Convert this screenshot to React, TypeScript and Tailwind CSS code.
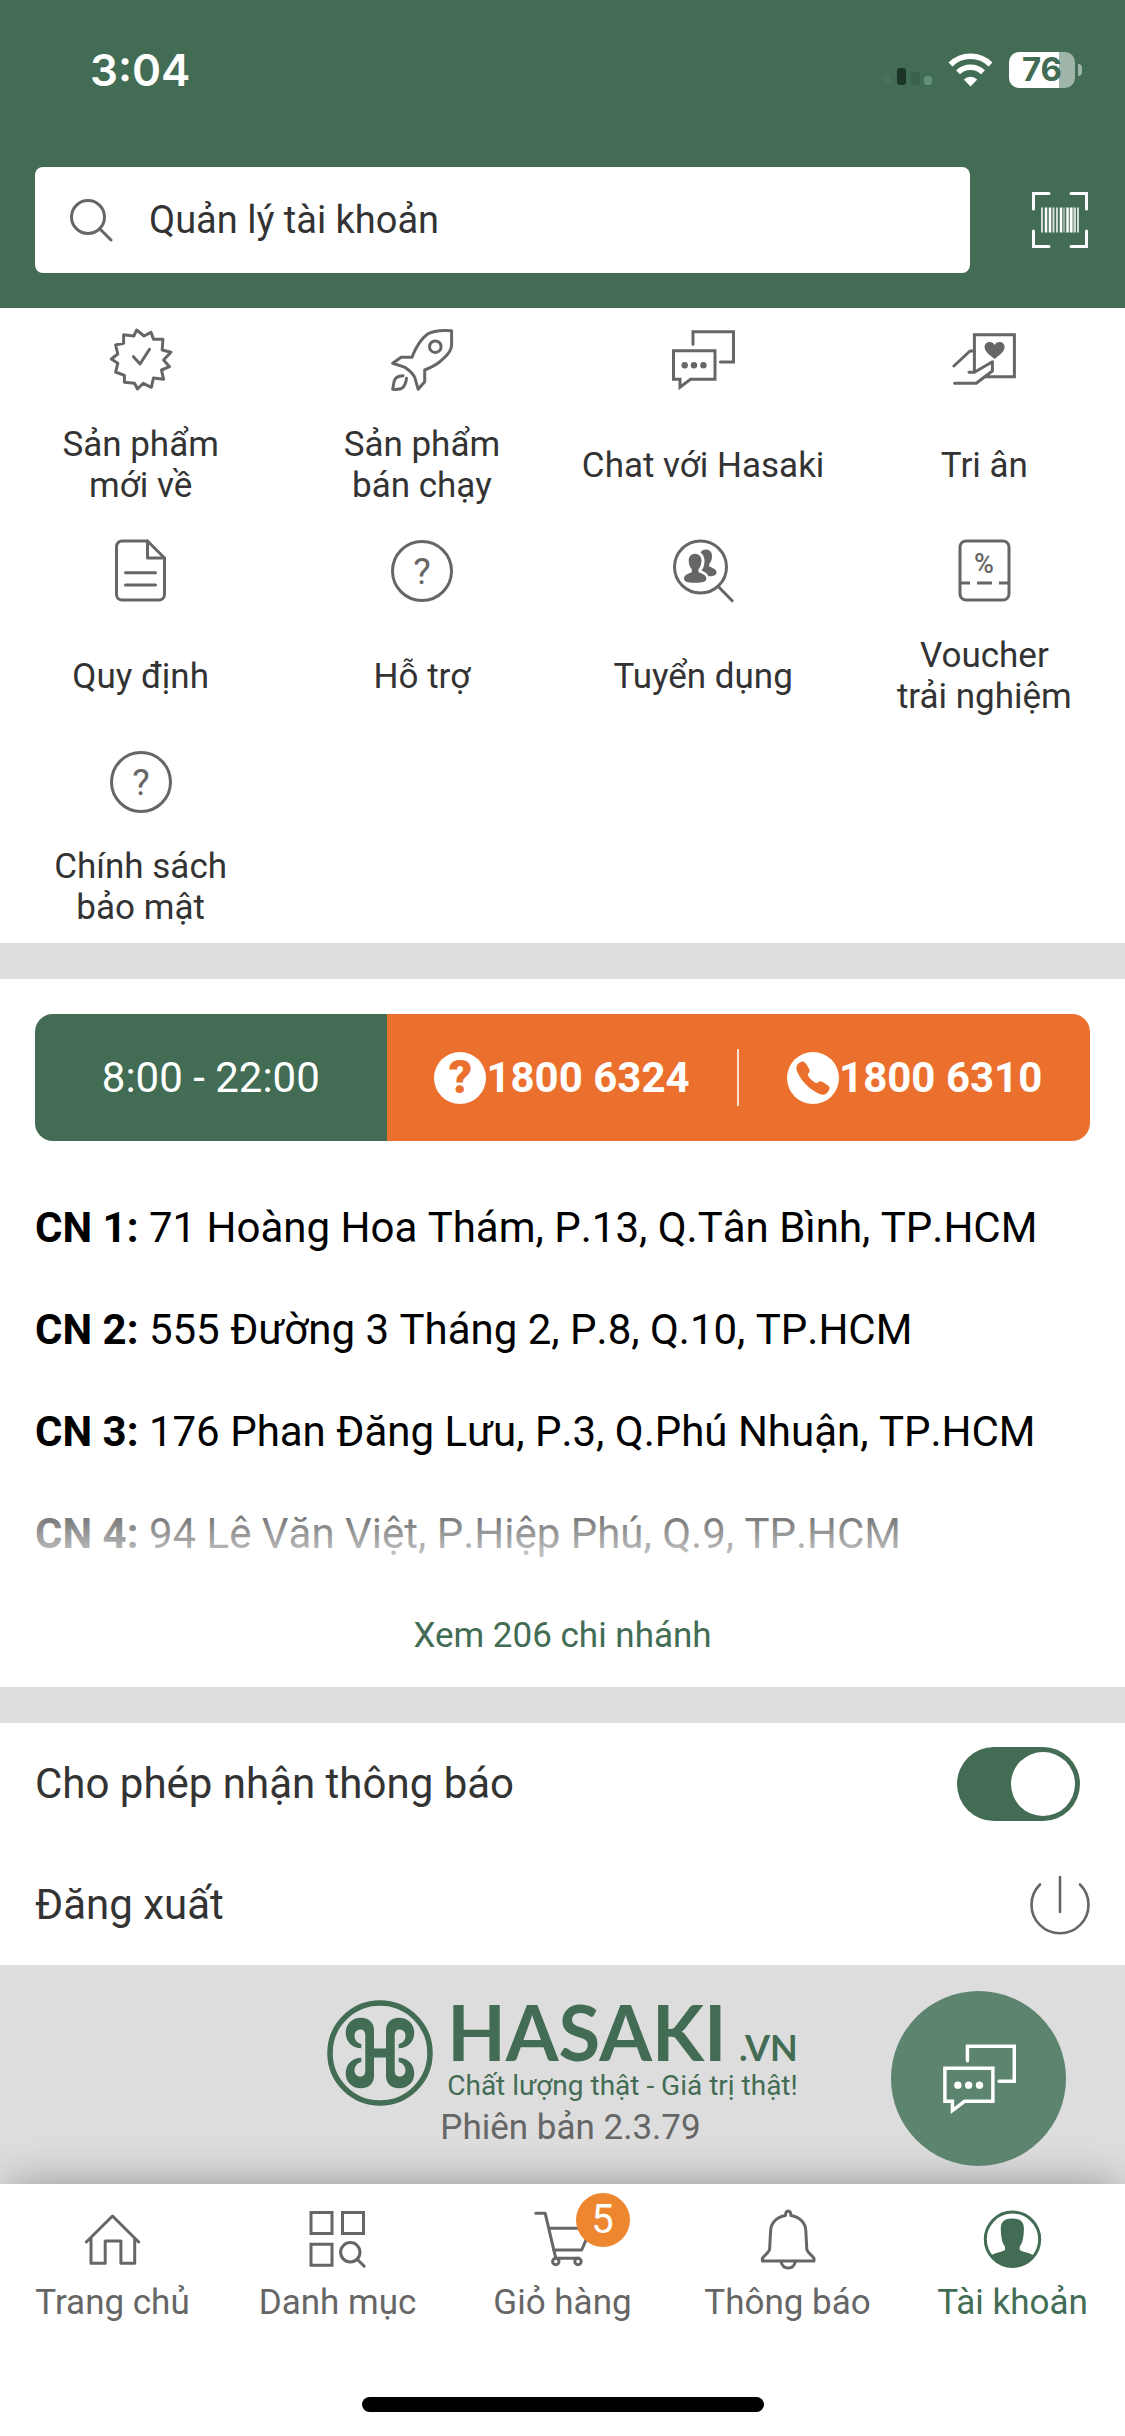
import type { ReactNode } from "react";
import { IoCall } from "react-icons/io5";

interface IconProps {
  children: ReactNode;
  className?: string;
}

// All line icons share a 64x64 grid
function Icon({ children, className = "size-16" }: IconProps) {
  return (
    <svg
      viewBox="0 0 64 64"
      fill="none"
      stroke="currentColor"
      strokeWidth={3}
      strokeLinecap="round"
      strokeLinejoin="round"
      aria-hidden="true"
      className={className}
    >
      {children}
    </svg>
  );
}

function BadgeIcon() {
  return (
    <Icon>
      <path d="M27.7 2 35 8l7-3.7 2.5 7 9.4 0-.7 10.7 8.7 2.3-7.3 7.7 5.9 6.7-8 3.3 2.1 9.3-10.1-1.3-2.2 9.3-8-4-5.8 5.7-3-5.7-10.1-1 0-7-8.8-3.3 2.2-8.7L2.3 31l6.5-5-2.2-9 8-1.7 0-8.6 10.2 1.3z" />
      <path d="M24.5 28.7 31 36l9.5-14.7" />
    </Icon>
  );
}

function RocketIcon() {
  return (
    <Icon>
      <path d="M61.6 2.7C52 2 43 2.6 37.3 6.3 31 11 25.500 20 22 29.300H11.100L2.700 35.300C7 37 11 37.500 15.500 39.700c3.500 2.300 7 5.600 9 9l3.700 12.600 6.500-7.600V42c7-2.600 14-6.200 18.900-11.700C59 25.500 61.600 21 61.600 17z" />
      <circle cx="45.300" cy="18.700" r="5.800" />
      <path d="M13 47.700c-6 .3-8 2-8.800 5.300l-1.500 8.300c5 .4 8.500-.3 10.300-2 2-2 3-5 3.500-9" />
    </Icon>
  );
}

function ChatIcon({ className }: { className?: string }) {
  return (
    <Icon className={className}>
      <path strokeLinejoin="miter" d="M22 16.300V3.700h40.500V34H49.400" />
      <path strokeLinejoin="miter" d="M2.500 22.700H44v28.600H19.500L9 59.300v-8H2.500z" />
      <g fill="currentColor" stroke="none">
        <circle cx="13.700" cy="37.300" r="3.200" />
        <circle cx="23" cy="37.300" r="3.200" />
        <circle cx="32.400" cy="37.300" r="3.200" />
      </g>
    </Icon>
  );
}

function GratitudeIcon() {
  return (
    <Icon>
      <path strokeLinejoin="miter" d="M22.400 43.700V6.700h40v42H34" />
      <path d="M1.900 38 18 23h4.400" />
      <path d="M17 44.300h5.400l18-10.600V43L24.200 55.300H2.600" />
      <path
        fill="currentColor"
        stroke="none"
        d="M42.600 31c-5-4-10-7.500-10-12 0-3 2.200-5 5-5 2.200 0 4 1 5 3 1-2 2.800-3 5-3 2.800 0 5 2 5 5 0 4.500-5 8-10 12z"
      />
    </Icon>
  );
}

function DocumentIcon() {
  return (
    <Icon>
      <path d="M38.500 2H13a5.500 5.500 0 0 0-5.500 5.500v48A5.500 5.500 0 0 0 13 61h37a5.500 5.500 0 0 0 5.500-5.500V19z" />
      <path d="M38.500 2v17h17M16.500 33.700h30M16.500 46h30" />
    </Icon>
  );
}

function HelpIcon() {
  return (
    <Icon>
      <circle cx="32" cy="32" r="29.500" />
      <text
        x="32"
        y="45"
        textAnchor="middle"
        fill="currentColor"
        stroke="none"
        className="font-[Roboto,sans-serif] text-[37px]"
      >
        ?
      </text>
    </Icon>
  );
}

function RecruitIcon() {
  return (
    <Icon>
      <circle cx="29.500" cy="28" r="26" />
      <path d="m47.500 47.700 13.700 14" />
      <g fill="currentColor" stroke="none">
        <path d="M24.100 14.800c4 0 6.400 2.900 6.400 7 0 3.600-1.400 6.600-3 8.400v3c3.500 1.600 7.800 2.500 7.800 6.200 0 3-3 4.300-11.200 4.300S13 42.400 13 39.400c0-3.700 4.300-4.600 7.800-6.200v-3c-1.700-1.800-3.100-4.800-3.100-8.400 0-4.100 2.400-7 6.400-7z" />
        <path d="M29.500 13.500c1-2 3-3 5.500-3 4 0 6 3 6 6.800 0 3.400-1.200 6-2.800 7.800v2.400c3.500 1.500 7.300 2.600 7.300 6 0 2.700-3 4-8 3.800-1.600-3.300-4.400-4.700-7-5.700 2.200-3 3-6 3-9.700s-1.500-6.700-4-8.400z" />
      </g>
    </Icon>
  );
}

function VoucherIcon() {
  return (
    <Icon>
      <rect x="8" y="2" width="49" height="59" rx="6" />
      <path strokeLinecap="butt" d="M8 44h10M25 44h15M47 44h10" />
      <text
        x="32"
        y="34"
        textAnchor="middle"
        fill="currentColor"
        stroke="none"
        className="font-[Roboto,sans-serif] text-[27px] font-medium"
      >
        %
      </text>
    </Icon>
  );
}

function HomeIcon() {
  return (
    <Icon>
      <path d="M5.300 34 31.500 8l26.200 26M10 30.500v24.800h14.200V33h15.700v22.300h13.800V30.500" />
    </Icon>
  );
}

function CategoryIcon() {
  return (
    <Icon>
      <path strokeLinejoin="miter" d="M5 4.500h21v21H5zM36.500 4.500h21v21h-21zM5 36.300h21v21H5z" />
      <circle cx="44.300" cy="44.300" r="9.700" />
      <path d="m51.200 51.200 7 7" />
    </Icon>
  );
}

function CartIcon() {
  return (
    <Icon>
      <path d="M4.800 5.300h9.400l10.600 45H48M17.500 20.300H60L50.700 42H22.500" />
      <circle cx="24.800" cy="53.500" r="3.200" />
      <circle cx="47" cy="53.500" r="3.200" />
    </Icon>
  );
}

function BellIcon() {
  return (
    <Icon>
      <path d="M29.500 7.500c0-3 1-4.500 2.700-4.500s2.700 1.500 2.700 4.500C44 9 49.500 15 49.800 22.500l1 19c1.500 4 4.500 5 7.200 8.800V53H6.400v-2.700c2.700-3.800 5.700-4.800 7.200-8.800l1-19C15 15 20.500 9 29.500 7.500z" />
      <path d="M25 53.500c1 4.500 3.500 6.500 7.200 6.500s6.200-2 7.200-6.500" />
    </Icon>
  );
}

function AccountIcon() {
  return (
    <Icon>
      <circle cx="31.500" cy="31.300" r="27.200" />
      <path
        fill="currentColor"
        stroke="none"
        d="M31.300 10.500c8 0 12 3.500 11.600 11-.2 8-1.500 14-4.200 17v3.500c4 2.500 9.500 2.500 14 5.500C47 55 40 58.500 31.500 58.500S16 55 10 47.500c4.500-3 10-3 14-5.500v-3.500c-2.700-3-4-9-4.200-17-.4-7.500 3.500-11 11.500-11z"
      />
    </Icon>
  );
}

const CURL =
  "M47 53V30C47 22 41 17.700 34 17.700C25 17.700 18.700 24 18.700 32.500C18.700 41.500 25 48.300 34.300 48.300V44C30 43 27.500 39.500 27.500 35.500C27.500 31.500 30.500 29.500 33.500 29.500C36.700 29.500 38.300 32 38.300 35V53Z";

function LogoMark() {
  return (
    <svg viewBox="0 0 106 106" aria-hidden="true" className="size-[106px] shrink-0" fill="currentColor">
      <circle cx="53" cy="53" r="50" fill="none" stroke="currentColor" strokeWidth="5.500" />
      <path d={CURL} />
      <path d={CURL} transform="matrix(-1 0 0 1 106 0)" />
      <path d={CURL} transform="matrix(1 0 0 -1 0 106)" />
      <path d={CURL} transform="matrix(-1 0 0 -1 106 106)" />
      <path d="M42 48.500h22v9H42z" />
    </svg>
  );
}

const SHORTCUTS = [
  { label: "Sản phẩm\nmới về", icon: <BadgeIcon /> },
  { label: "Sản phẩm\nbán chạy", icon: <RocketIcon /> },
  { label: "Chat với Hasaki", icon: <ChatIcon /> },
  { label: "Tri ân", icon: <GratitudeIcon /> },
  { label: "Quy định", icon: <DocumentIcon /> },
  { label: "Hỗ trợ", icon: <HelpIcon /> },
  { label: "Tuyển dụng", icon: <RecruitIcon /> },
  { label: "Voucher\ntrải nghiệm", icon: <VoucherIcon /> },
  { label: "Chính sách\nbảo mật", icon: <HelpIcon /> },
];

const BRANCHES = [
  { name: "CN 1:", address: "71 Hoàng Hoa Thám, P.13, Q.Tân Bình, TP.HCM" },
  { name: "CN 2:", address: "555 Đường 3 Tháng 2, P.8, Q.10, TP.HCM" },
  { name: "CN 3:", address: "176 Phan Đăng Lưu, P.3, Q.Phú Nhuận, TP.HCM" },
  { name: "CN 4:", address: "94 Lê Văn Việt, P.Hiệp Phú, Q.9, TP.HCM" },
];

const TABS = [
  { label: "Trang chủ", icon: <HomeIcon /> },
  { label: "Danh mục", icon: <CategoryIcon /> },
  { label: "Giỏ hàng", icon: <CartIcon />, badge: 5 },
  { label: "Thông báo", icon: <BellIcon /> },
  { label: "Tài khoản", icon: <AccountIcon />, active: true },
];

function StatusBar() {
  return (
    <div className="flex h-[139px] items-center justify-between pr-[43px] pl-[90px] font-[Inter,sans-serif] text-white">
      <span className="text-[44px] font-semibold">3:04</span>
      <div className="flex items-center gap-4">
        <svg viewBox="0 0 52 36" aria-hidden="true" className="h-9 w-[52px]">
          <rect x="3" y="22" width="8" height="11" rx="4" fill="#4b705a" />
          <rect x="17" y="16" width="9" height="17" rx="3" fill="#1c3528" />
          <rect x="31" y="20" width="9" height="13" rx="4" fill="#3a614b" />
          <rect x="44" y="24" width="8" height="9" rx="3" fill="#5f9279" />
        </svg>
        <svg viewBox="0 0 45 34" aria-hidden="true" className="h-[34px] w-[45px]" fill="none" stroke="currentColor">
          <path strokeWidth="5.500" d="M2.500 11.500a28.500 28.500 0 0 1 40 0" />
          <path strokeWidth="5.500" d="M10 19.300a18 18 0 0 1 25 0" />
          <path fill="currentColor" stroke="none" d="M15.800 26.500a9.800 9.800 0 0 1 13.400 0l-6.700 7z" />
        </svg>
        <div className="flex items-center gap-[3px]">
          <div className="flex h-9 w-[66px] items-center justify-center rounded-[10px] bg-linear-to-r from-white from-76% to-[#a0b5a9] to-76% text-[33px] font-bold text-[#426c54]">
            76
          </div>
          <div className="h-3 w-1 rounded-r-full bg-[#a0b5a9]" />
        </div>
      </div>
    </div>
  );
}

function Header() {
  return (
    <header className="bg-[#426c54]">
      <StatusBar />
      <div className="flex items-center gap-[62px] pt-7 pr-[37px] pb-[35px] pl-[35px]">
        <label className="flex h-[106px] flex-1 items-center gap-9 rounded-lg bg-white pl-[34px]">
          <svg viewBox="0 0 44 44" aria-hidden="true" className="size-11 text-[#666]" fill="none" stroke="currentColor" strokeWidth="3" strokeLinecap="round">
            <circle cx="19" cy="19" r="16.500" />
            <path d="m31 31 11 11" />
          </svg>
          <input
            type="search"
            aria-label="Tìm kiếm"
            placeholder="Quản lý tài khoản"
            className="min-w-0 flex-1 text-[38px] text-[#333] outline-none placeholder:text-[#333]"
          />
        </label>
        <button type="button" aria-label="Quét mã vạch" className="text-white">
          <svg viewBox="0 0 56 56" aria-hidden="true" className="size-14" fill="none" stroke="currentColor" strokeWidth="3">
            <path strokeLinecap="round" d="M1.500 17V1.500H17M39 1.500h15.500V17M54.500 39v15.500H39M17 54.500H1.500V39" />
            <path opacity=".75" strokeWidth="2" d="M10 15.500v25M21.500 15.500v25M25 15.500v25M43 15.500v25M46 15.500v25" />
            <path d="M14 15.500v25M18 15.500v25M29 15.500v25M35.500 15.500v25M39 15.500v25" strokeWidth="2.500" />
            <path opacity=".6" strokeWidth="1.500" d="M32 15.500v25M41 15.500v25" />
          </svg>
        </button>
      </div>
    </header>
  );
}

function Hotline({ number, icon }: { number: string; icon: ReactNode }) {
  return (
    <a href={`tel:${number.replace(" ", "")}`} className="flex flex-1 items-center justify-center">
      <span className="flex size-[52px] items-center justify-center rounded-full bg-white text-[#ec702d]">{icon}</span>
      <span className="font-bold">{number}</span>
    </a>
  );
}

export default function App() {
  return (
    <div className="flex min-h-screen flex-col bg-[#ddd] font-[Roboto,sans-serif] text-[#333]">
      <Header />

      <main className="flex flex-1 flex-col">
        <nav aria-label="Tiện ích" className="grid grid-cols-4 bg-white pb-0.5">
          {SHORTCUTS.map((s) => (
            <a key={s.label} href="#" className="flex flex-col items-center gap-8 pt-5 pb-[13px]">
              <span className="text-[#666]">{s.icon}</span>
              <span className="flex h-[82px] items-center text-center text-[35px] leading-[41px] whitespace-pre-line">
                {s.label}
              </span>
            </a>
          ))}
        </nav>

        <section className="mt-9 bg-white px-[35px] pt-[35px] text-[42px] text-black">
          <div className="flex h-[127px] overflow-hidden rounded-[18px] text-white">
            <div className="flex flex-1 items-center justify-center bg-[#426c54]">8:00 - 22:00</div>
            <div className="flex flex-2 items-center bg-[#ec702d]">
              <Hotline number="1800 6324" icon={<span className="text-[46px] font-black">?</span>} />
              <div className="h-[57px] w-0.5 bg-white/80" />
              <Hotline number="1800 6310" icon={<IoCall className="size-[38px]" />} />
            </div>
          </div>

          <div className="relative mt-9">
            <ul className="[font-kerning:none]">
              {BRANCHES.map((b) => (
                <li key={b.name} className="leading-[102px]">
                  <b>{b.name}</b> {b.address}
                </li>
              ))}
            </ul>
            <div className="absolute inset-x-0 bottom-0 h-32 bg-linear-to-b from-white/0 to-white" />
          </div>

          <button type="button" className="block h-[102px] w-full text-[35px] text-[#426c54]">
            Xem 206 chi nhánh
          </button>
        </section>

        <section className="mt-9 bg-white px-[35px] text-[42px]">
          <label className="flex h-[121px] items-center justify-between">
            Cho phép nhận thông báo
            <input
              type="checkbox"
              role="switch"
              defaultChecked
              className="mr-2.5 flex h-[74px] w-[123px] appearance-none items-center rounded-full bg-[#ccc] px-[5px] before:size-16 before:rounded-full before:bg-white checked:justify-end checked:bg-[#426c54]"
            />
          </label>
          <button type="button" className="flex h-[121px] w-full items-center justify-between">
            Đăng xuất
            <svg viewBox="0 0 60 60" aria-hidden="true" className="size-[60px] text-[#666]" fill="none" stroke="currentColor" strokeWidth="2.600" strokeLinecap="round">
              <path d="M10 9.500a28.500 28.500 0 1 0 40 0M30 2v35" />
            </svg>
          </button>
        </section>

        <section className="relative flex flex-1 flex-col items-center pt-[35px] pb-9">
          <div className="flex gap-3.5 text-[#426c54]">
            <LogoMark />
            <div className="flex flex-col">
              <div className="flex h-16 items-baseline justify-between font-[Lato,sans-serif] font-bold">
                <span className="text-[76px] leading-[64px]">HASAKI</span>
                <span className="text-[36px] leading-none">.VN</span>
              </div>
              <span className="text-[28px] leading-[43px]">Chất lượng thật - Giá trị thật!</span>
            </div>
          </div>
          <p className="pl-4 text-[35px] leading-[41px] text-[#666]">Phiên bản 2.3.79</p>
          <button
            type="button"
            aria-label="Chat với Hasaki"
            className="absolute top-[26px] right-[59px] z-10 flex size-[175px] items-center justify-center rounded-full bg-[#5d846e] text-white"
          >
            <ChatIcon className="size-[74px]" />
          </button>
        </section>
      </main>

      <footer className="relative bg-white shadow-[0_-8px_40px_-8px_rgba(0,0,0,0.32)]">
        <nav aria-label="Điều hướng" className="grid grid-cols-5 pt-6">
          {TABS.map((t) => (
            <a
              key={t.label}
              href="#"
              aria-current={t.active ? "page" : undefined}
              className={`flex flex-col items-center gap-2.5 ${t.active ? "text-[#426c54]" : "text-[#666]"}`}
            >
              <span className="relative">
                {t.icon}
                {t.badge && (
                  <span className="absolute -top-[15px] left-[45px] flex size-[54px] items-center justify-center rounded-full bg-[#ee8630] text-[40px] text-white">
                    {t.badge}
                  </span>
                )}
              </span>
              <span className="text-[35px] leading-[41px]">{t.label}</span>
            </a>
          ))}
        </nav>
        <div className="mx-auto mt-[74px] mb-6 h-[15px] w-[402px] rounded-full bg-black" />
      </footer>
    </div>
  );
}
